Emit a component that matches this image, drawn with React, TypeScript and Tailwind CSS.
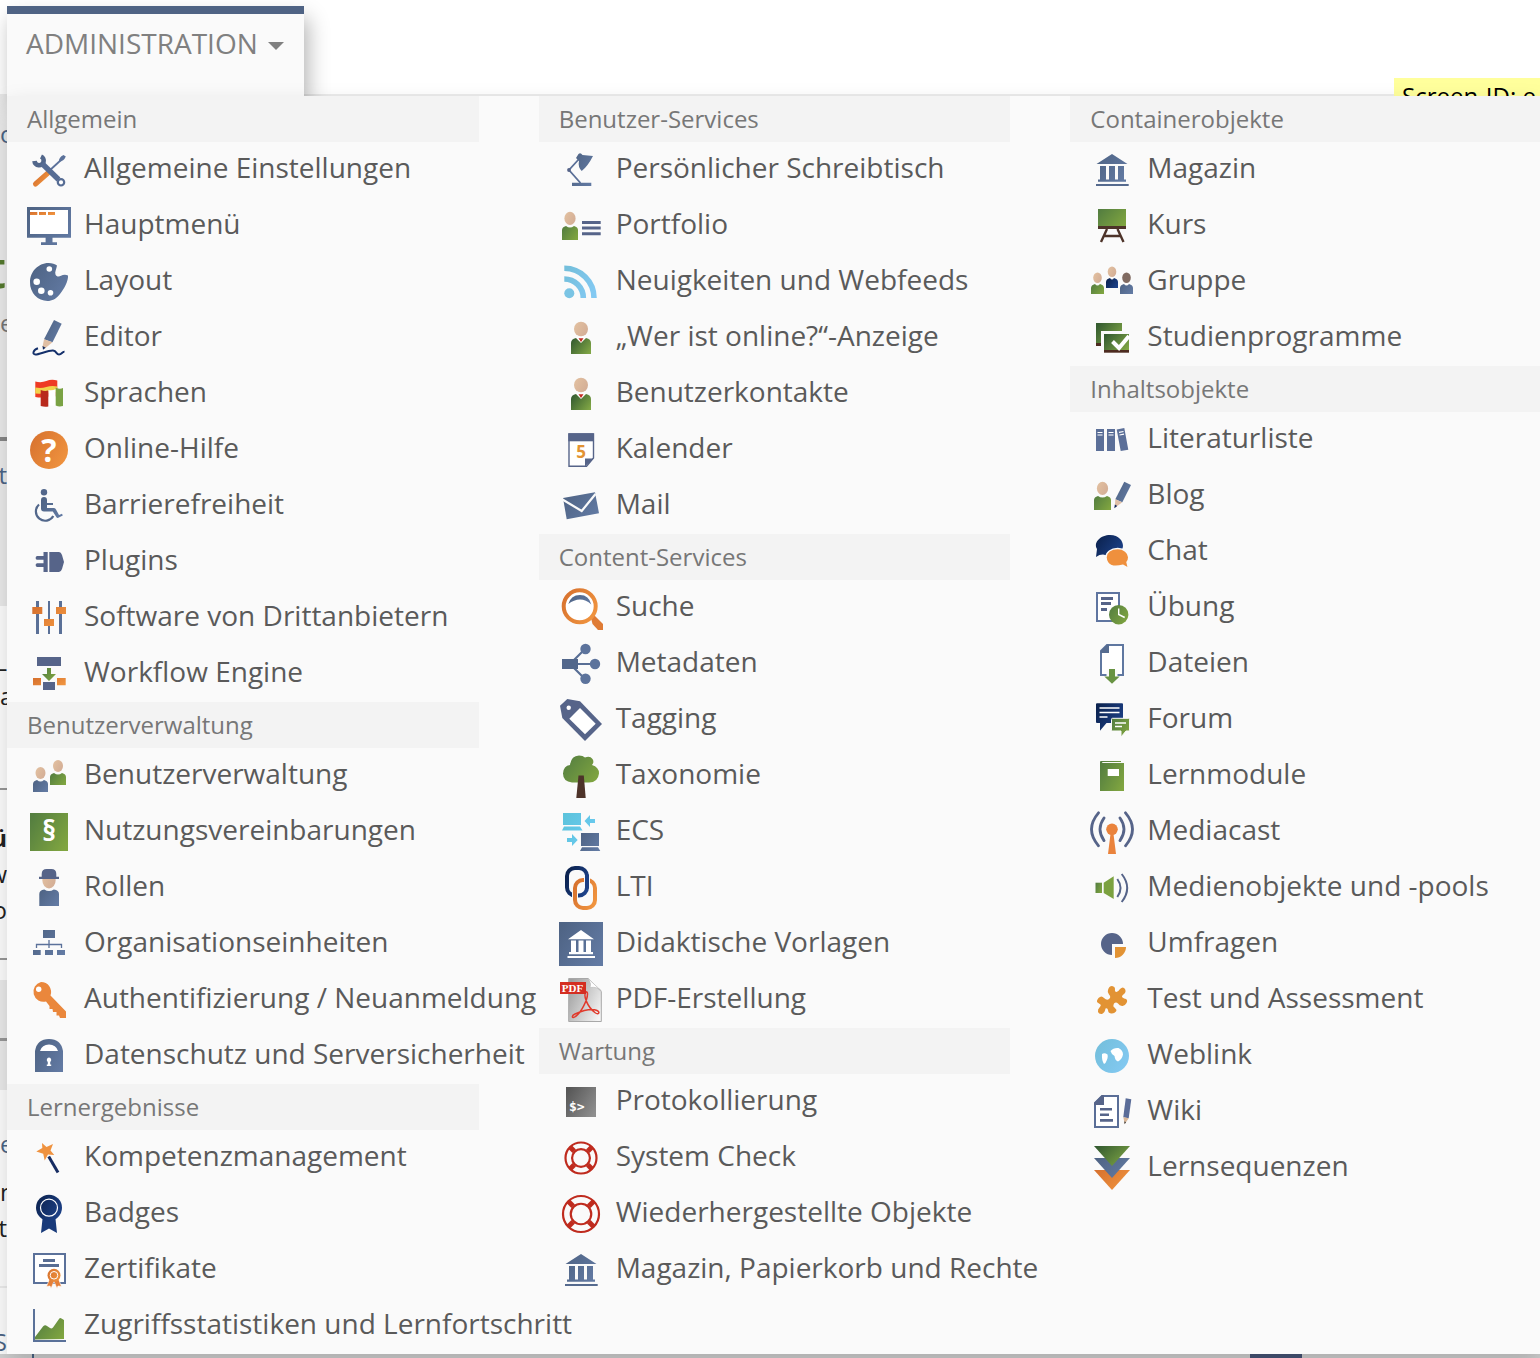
import { ReactNode } from "react";

const Svg = ({ children }: { children: ReactNode }) => (
    <svg viewBox="0 0 44 44" className="mt-1.5 size-11 shrink-0" aria-hidden="true">
        {children}
    </svg>
);

function Gradients() {
    const colors = [
        ["blue", "#4f6485", "#627aa3"],
        ["green", "#557f40", "#80a540"],
        ["darkgreen", "#355c30", "#7fa545"],
        ["orange", "#d8732f", "#f0943f"],
        ["navy", "#0c2350", "#1d428a"],
        ["sky", "#74bfdc", "#83c9f2"],
        ["cyan", "#5cc3dc", "#6ccbf2"],
        ["skin", "#e2c0a0", "#d3ad95"],
        ["gray", "#575757", "#8e8e8e"],
        ["paper", "#a0a0a0", "#f4f4f4"],
    ];
    return (
        <svg className="absolute size-0" aria-hidden="true">
            <defs>
                {colors.map(([id, from, to]) => (
                    <linearGradient key={id} id={id} x1="0" y1="0.2" x2="1" y2="0.8">
                        <stop offset="0" stopColor={from} />
                        <stop offset="1" stopColor={to} />
                    </linearGradient>
                ))}
            </defs>
        </svg>
    );
}

const Person = ({ x, y, w, h, fill, skin = "url(#skin)", r = 5 }: { x: number; y: number; w: number; h: number; fill: string; skin?: string; r?: number }) => (
    <>
        <path d={`M${x} ${y + h}v${-h + 4}q0-3 4-4q${w / 2 - 4} 3 ${w - 8} 0q4 1 4 4v${h - 4}z`} fill={fill} />
        <ellipse cx={x + w / 2} cy={y - r - 2} rx={r} ry={r + 1} fill={skin} />
    </>
);

const OnlineUser = () => (
    <Svg>
        <path d="M12 38V27q0-4 5-5h10q5 1 5 5v11z" fill="url(#darkgreen)" />
        <path d="M16.500 21.500l5.500 5.500 5.500-5.500z" fill="#fff" />
        <path d="M19.500 22.300h5L22 26z" fill="#c22a20" />
        <ellipse cx="22" cy="13" rx="7" ry="7.300" fill="url(#skin)" />
    </Svg>
);

const Temple = () => (
    <Svg>
        <path d="M22 6l15.500 10h-31zM10 18h6v13.500h3V18h6v13.500h3V18h6v13.500h2v2.200H8v-2.200h2z" fill="url(#blue)" />
        <path d="M6 36h32.700v2H6z" fill="#556a8e" />
    </Svg>
);

const Lifebuoy = ({ r }: { r: number }) => (
    <Svg>
        <g fill="none" stroke="#bf2b1e">
            <circle cx="22" cy="22" r={r - 1} strokeWidth="2.200" />
            <circle cx="22" cy="22" r={r * 0.54} strokeWidth="2.200" />
            {[45, 135, 225, 315].map((a) => (
                <path key={a} d={`M${22 + r * 0.58} 22H${22 + r - 1}`} strokeWidth="5" transform={`rotate(${a} 22 22)`} />
            ))}
        </g>
    </Svg>
);

const icons: Record<string, ReactNode> = {
    tools: (
        <Svg>
            <path d="M21 25L8.500 36" stroke="url(#orange)" strokeWidth="5" strokeLinecap="round" />
            <path d="M22 23L34 12" stroke="#5b719a" strokeWidth="1.800" />
            <path d="M32 13.500q-.5-4 4.500-6.500l2.300 1.500q-2 5-6.800 5z" fill="#5b719a" />
            <path d="M14 8.500A4.600 4.600 0 1 1 7.500 13" fill="none" stroke="#52678b" strokeWidth="4.600" />
            <path d="M15 15.500L31.500 31.500" stroke="#566c94" strokeWidth="5.400" />
            <circle cx="34" cy="34.300" r="3.200" fill="#fff" stroke="#566c94" strokeWidth="2.200" />
        </Svg>
    ),
    monitor: (
        <Svg>
            <path d="M0 3h44v30.700H25.500v4.600h4.500V41H14v-2.700h4.600v-4.600H0z" fill="url(#blue)" />
            <path d="M3 6h38v24H3z" fill="#fff" />
            <path d="M3 8h7.300v3H3zM12 8h7v3h-7zM21 8h7v3h-7z" fill="url(#orange)" />
        </Svg>
    ),
    palette: (
        <Svg>
            <path d="M21.500 3Q27 3 30 5.500C29.500 9 27.500 12 28.500 14.500S32 17 34 15.800 39 14.500 41 15.500C41.500 21 37 29 33 34S25 41 20.500 41A17.500 18.500 0 0 1 3 22C3 12 11 3 21.500 3z" fill="url(#blue)" />
            <g fill="#fff">
                <circle cx="22.300" cy="9" r="2.800" />
                <circle cx="9.700" cy="21.700" r="3.300" />
                <circle cx="14.300" cy="30.700" r="3.300" />
                <circle cx="23.500" cy="32.700" r="2.800" />
            </g>
        </Svg>
    ),
    editor: (
        <Svg>
            <path d="M27 4l7.700 3.700-9.200 18.600-8.500-3z" fill="url(#blue)" />
            <path d="M17 23.300l8.500 3L18.500 32l-3-1z" fill="#e0bfa4" />
            <path d="M15.500 30l3.200 1.800-2.700 2z" fill="#12295c" />
            <path d="M11 32.300C6 34 5 38.500 8.500 38.500S22 34 26 34.500 29 38.500 32 38.500 35 35.500 37.500 35.800" fill="none" stroke="#14306b" strokeWidth="2" />
        </Svg>
    ),
    flags: (
        <Svg>
            <path d="M8.300 9.500q6 1.500 11-.5t11-.5v16q-6-.5-11 .5t-11 0z" fill="#ee3a24" />
            <path d="M8.300 15.500q6 1 11-.5t11-.5v5.500q-6 0-11 1t-11 .5z" fill="#f1d24b" />
            <path d="M21.300 18q4 1 7.500-1v16q-3.500 1-7.500 0z" fill="#fff" />
            <path d="M13.700 18q4 1.500 7.600.5v16q-3.500.8-7.600-.5z" fill="#b8291c" />
            <path d="M28.700 15.500q4 2.200 7.300.5v18q-4 1-7.300-.5z" fill="#7aa244" />
        </Svg>
    ),
    help: (
        <Svg>
            <circle cx="22" cy="22" r="19" fill="url(#orange)" />
            <text x="22" y="34" textAnchor="middle" className="fill-white text-[32px] font-bold">?</text>
        </Svg>
    ),
    wheelchair: (
        <Svg>
            <circle cx="17" cy="8.300" r="3.200" fill="#52678b" />
            <path d="M14 16q0-3 3-3t3 3v3h6v2h-6v3h7q1.500 0 2 1.500l3 5.500 3-1.200.8 1.700-5 2.500q-1 0-1.500-1l-3.500-5.500H17q-3 0-3-3z" fill="url(#blue)" />
            <path d="M12 20.500A9.300 9.300 0 1 0 26.300 32" fill="none" stroke="#52678b" strokeWidth="2.200" />
        </Svg>
    ),
    plug: (
        <Svg>
            <path d="M10 16h6.500v-4h4.200v20h-4.200v-5H10a2 2 0 0 1 0-3.800h6.500v-3.400H10A2 2 0 0 1 10 16zM22.300 12H32q2 0 3 3l2 7-2 7q-1 3-3 3h-9.700z" fill="#566489" />
        </Svg>
    ),
    sliders: (
        <Svg>
            <path d="M9 5h3v33H9zM21 5h2v33h-2zM32 5h3v33h-3z" fill="#5a7097" />
            <path d="M5.300 11h10v7h-10zM17 23h10v7H17zM29 11h10v7H29z" fill="url(#orange)" />
        </Svg>
    ),
    workflow: (
        <Svg>
            <path d="M10 5h24v9H10zM16 30h12v8H16z" fill="#566489" />
            <path d="M6 26h8v7.300H6zM30 26h8.700v7.300H30z" fill="url(#orange)" />
            <path d="M20 16h4v6h5l-7 7-7-7h5z" fill="url(#green)" />
        </Svg>
    ),
    users: (
        <Svg>
            <Person x={6} y={26} w={15} h={12} fill="url(#blue)" />
            <Person x={23} y={19} w={16} h={12} fill="url(#green)" />
        </Svg>
    ),
    paragraph: (
        <Svg>
            <path d="M3 3h38v38H3z" fill="url(#green)" />
            <text x="22" y="31" textAnchor="middle" className="fill-white text-[28px] font-bold">§</text>
        </Svg>
    ),
    role: (
        <Svg>
            <ellipse cx="22" cy="14" rx="6.700" ry="8.500" fill="url(#skin)" />
            <path d="M12 10.700h2.700V8q0-5 5-5h4.600q5 0 5 5v2.700H32V13H12z" fill="#566489" />
            <path d="M12.300 40V28q0-4 5-4.500 4.700 3 9.500 0 5.200.5 5.200 4.500v12z" fill="url(#blue)" />
        </Svg>
    ),
    orgunit: (
        <Svg>
            <path d="M16 8h12v8H16zM6 28h7.700v5H6zM18 28h8v5h-8zM30 28h8v5h-8z" fill="url(#blue)" />
            <path d="M22 18v8M9.500 26v-3.500h25V26" fill="none" stroke="#5b719a" strokeWidth="1.300" />
        </Svg>
    ),
    key: (
        <Svg>
            <path d="M14 4a10 10 0 0 1 9.500 13.500L39 33.500V40h-6l-1-2.500h-2.500V34H26l-.5-3h-3v-3L19 23.500A10 10 0 1 1 14 4z" fill="#ea873c" />
            <circle cx="11.700" cy="11.300" r="2.700" fill="#fff" />
        </Svg>
    ),
    lock: (
        <Svg>
            <path d="M8 38V17Q10 5 22 5t14 12v21z" fill="url(#blue)" />
            <path d="M13 17q2-6.500 9-6.500t9 6.500zM22 23.500a2.500 2.500 0 0 1 1.200 4.500v2.500h1v1.500h-4.400v-1.500h1V28a2.500 2.500 0 0 1 1.200-4.500z" fill="#fff" />
        </Svg>
    ),
    wand: (
        <Svg>
            <path d="M21.700 20.500l9.300 16" stroke="#162c62" strokeWidth="3" />
            <path d="M15 7l4.500 4 6.500-3-2.500 6.500L27.300 19l-6.300-.5-3.300 6-1.500-6.700-6.900-2.300 6-3.500z" fill="#ef923f" />
        </Svg>
    ),
    badge: (
        <Svg>
            <path d="M15.700 25h12.600L30 41l-8-4.500-8 4.500z" fill="#183a7a" />
            <circle cx="22" cy="15.700" r="13" fill="url(#navy)" />
            <circle cx="22" cy="15.700" r="8.500" fill="none" stroke="#fff" strokeWidth="1.200" />
        </Svg>
    ),
    certificate: (
        <Svg>
            <path d="M7 6h31v29H7z" fill="#fff" stroke="#5b719a" strokeWidth="2" />
            <path d="M16 11h12v3H16zM12 16h20v3H12z" fill="#586d93" />
            <path d="M22.500 31h9l3 7.500-3.500-.5-1 2.500-3-7-3 7-1-2.500-3.500.5z" fill="#e57f38" stroke="#fff" strokeWidth=".6" />
            <circle cx="27" cy="27.300" r="6.500" fill="url(#orange)" />
            <circle cx="27" cy="27.300" r="3.800" fill="none" stroke="#fff" />
        </Svg>
    ),
    stats: (
        <Svg>
            <path d="M8 35.500V33l8-10.500q2-2 4-.5l3 2q1.500 1 3-.5l6-8.500q1-1.500 2.500-.5l2.500 1.500v19z" fill="url(#green)" />
            <path d="M7 5v32h32" fill="none" stroke="#5a7199" strokeWidth="2" />
        </Svg>
    ),
    lamp: (
        <Svg>
            <path d="M21.500 35L10 22 20 11" fill="none" stroke="#5a6f97" strokeWidth="1.800" />
            <circle cx="10" cy="22" r="1.900" fill="#566489" />
            <path d="M13 34.700h19.300V38H13zM17 10l2.500-4q2-2 4 1L34 8q-5 10-11.300 15-4-4-2.700-10z" fill="url(#blue)" />
        </Svg>
    ),
    portfolio: (
        <Svg>
            <Person x={3} y={22} w={16} h={14} fill="url(#green)" r={5.6} />
            <path d="M23 17h18.700v3H23zM23 22.500h18.700v3H23zM23 28.300h18.700v3H23z" fill="#566489" />
        </Svg>
    ),
    rss: (
        <Svg>
            <circle cx="10.300" cy="33.300" r="5" fill="#7ac4e4" />
            <path d="M5.300 8.300A29.700 29.700 0 0 1 35 38M5.300 19A19 19 0 0 1 24.300 38" fill="none" stroke="url(#sky)" strokeWidth="5.600" />
        </Svg>
    ),
    online: <OnlineUser />,
    calendar: (
        <Svg>
            <path d="M10 6h24.500v24l-7 8.300H10z" fill="#fff" stroke="#566489" strokeWidth="1.400" />
            <path d="M9.300 5.300h25.400v8H9.300z" fill="#566489" />
            <path d="M26 30.500h8.700l-8.700 8z" fill="#566489" />
            <text x="22" y="30" textAnchor="middle" className="fill-[#e29333] text-[17px] font-bold">5</text>
        </Svg>
    ),
    mail: (
        <Svg>
            <path d="M4 14l32-5.700 4 21-32.300 6z" fill="url(#blue)" />
            <path d="M3.500 15.500L22.700 27 36.500 10" fill="none" stroke="#fafafa" strokeWidth="2.200" />
        </Svg>
    ),
    search: (
        <Svg>
            <path d="M32 32l3-3 3 3 6 6v6h-5l-5.500-6z" fill="#df7b34" />
            <circle cx="20.700" cy="20.300" r="16" fill="#fff" stroke="url(#orange)" strokeWidth="4" />
            <path d="M9.300 18Q12 9 21 9t11.300 9.500Q27 13.500 21 13.500T9.300 18z" fill="url(#blue)" />
        </Svg>
    ),
    share: (
        <Svg>
            <path d="M11 22L26 7M11 22h25M11 22l15 15" stroke="#586e95" strokeWidth="2.200" />
            <path d="M3 17h16v10H3z" fill="#52678b" />
            <g fill="#5c739c">
                <circle cx="26.500" cy="7" r="5.200" />
                <circle cx="36" cy="22" r="5.200" />
                <circle cx="26.500" cy="36.700" r="5.200" />
            </g>
        </Svg>
    ),
    tag: (
        <Svg>
            <path d="M1 7.700L8.300 1 21 3.300 43 26 26 43 3.300 20z" fill="#566489" />
            <path d="M21 10l15.700 15.700L26 36.300 10.300 20.700z" fill="#fff" />
            <circle cx="9.700" cy="9.700" r="2.200" fill="#fff" />
        </Svg>
    ),
    tree: (
        <Svg>
            <path d="M11 11Q12 2 20 1.500q4 0 6 2 5-2 7.500 1.500 2 3-.5 6 7 2 7 8.500-1 9-10 9H13q-9-1-9-9 .5-8 7-8.500z" fill="url(#green)" />
            <path d="M19.500 21.500h5.300L26.700 44h-9.400z" fill="#4d3329" />
        </Svg>
    ),
    ecs: (
        <Svg>
            <path d="M4 3h18v12H4zM5 16.500h16l2.500 4H3zM25.500 11L31 5v4h5v4h-5v4zM8 28h5v-4l5.700 6-5.700 6v-4H8z" fill="url(#cyan)" />
            <path d="M22 23h18v13H22zM23 37.200h16l2.300 3.800H21z" fill="url(#blue)" />
        </Svg>
    ),
    link: (
        <Svg>
            <rect x="8" y="2" width="20" height="27.500" rx="8" fill="none" stroke="url(#navy)" strokeWidth="4" />
            <rect x="16" y="14" width="20" height="28" rx="8" fill="none" stroke="#fafafa" strokeWidth="6" />
            <rect x="16" y="14" width="20" height="28" rx="8" fill="none" stroke="url(#orange)" strokeWidth="4" />
            <path d="M28 9v13" stroke="#fafafa" strokeWidth="6" />
            <path d="M28 8.500v14" stroke="#1b3e83" strokeWidth="4" />
        </Svg>
    ),
    templates: (
        <Svg>
            <path d="M0 0h44v44H0z" fill="url(#blue)" />
            <path d="M22 8l13 9.300H9zM12 18.500h5V30h2.500V18.500h5V30H27V18.500h5V30h2v2.300H10V30h2zM8.500 34h27.500v2H8.500z" fill="#fff" />
        </Svg>
    ),
    pdf: (
        <Svg>
            <path d="M9.700 .5H29l13.300 13v30H9.700z" fill="url(#paper)" stroke="#a8a8a8" />
            <path d="M29 .5Q33 6 31 9.500q8-1 11.500 3.500z" fill="#fff" stroke="#bbb" strokeWidth=".6" />
            <path d="M27 14c-3 3 1 15 9.500 21 3 2 5-1 1.500-2.500-6-2.500-15 .5-22 3.500-4 2-3 5 .5 2.500C22 35 28.500 22 28.500 16c0-2-1-2.500-1.500-2z" fill="none" stroke="#e13a2b" strokeWidth="1.500" />
            <path d="M1 4h26v12H1z" fill="#d42e21" />
            <text x="13.500" y="14" textAnchor="middle" className="fill-white font-['Liberation_Serif',serif] text-[11px] font-bold">PDF</text>
        </Svg>
    ),
    terminal: (
        <Svg>
            <path d="M7 7h30v30H7z" fill="url(#gray)" />
            <text x="10" y="31" className="fill-white font-['DejaVu_Sans_Mono',monospace] text-[13px] font-bold">$&gt;</text>
        </Svg>
    ),
    check: <Lifebuoy r={16.5} />,
    restored: <Lifebuoy r={19} />,
    temple: <Temple />,
    course: (
        <Svg>
            <path d="M17 25l-6 13M27.500 25l6 13M14 32h16" fill="none" stroke="#4d3329" strokeWidth="2.400" />
            <path d="M8 5h28v18H8z" fill="url(#green)" />
            <path d="M8 22h28v3H8z" fill="#4d3329" />
        </Svg>
    ),
    group: (
        <Svg>
            <Person x={1} y={24} w={13} h={10} fill="url(#green)" r={4.3} />
            <Person x={16} y={18} w={12} h={10} fill="url(#navy)" r={4.3} />
            <Person x={30} y={24} w={13} h={10} fill="url(#blue)" skin="#806a61" r={4.3} />
        </Svg>
    ),
    program: (
        <Svg>
            <path d="M6 7h26v20H6z" fill="url(#darkgreen)" />
            <path d="M6 27h8v3H6z" fill="#4d2b20" />
            <path d="M11 15h29v23H11z" fill="#fafafa" />
            <path d="M14 18h25v16H14z" fill="url(#darkgreen)" />
            <path d="M14 34h25v2.700H14z" fill="#4d2b20" />
            <path d="M22.500 25.500l6.500 6.500 10-12" fill="none" stroke="#fff" strokeWidth="4" />
        </Svg>
    ),
    books: (
        <Svg>
            <path d="M6 11h8v22H6zM17 11h8v22h-8zM26.700 11.500l7.600-1.500 4 21.700-7.600 1.300z" fill="#5b6f98" />
            <path d="M7.500 14.500h5M7.500 17h5M18.500 14.500h5M18.500 17h5M29 14.300l4.500-.8M29.500 17l4.500-.8" stroke="#fff" strokeWidth="1.200" />
        </Svg>
    ),
    blog: (
        <Svg>
            <Person x={4} y={22} w={17} h={14} fill="url(#green)" r={5.6} />
            <path d="M34.300 7.700L41 11l-8.700 17.300-7-3z" fill="url(#blue)" />
            <path d="M25.300 25.300l7 3-7.500 5.400z" fill="#dfbfa6" />
            <path d="M24.900 30.500l2.300 1.500-2.900 2.200z" fill="#12295c" />
        </Svg>
    ),
    chat: (
        <Svg>
            <path d="M7 19C3 12 11 5 20 5s13 6 13 11-6 9.500-13 9.500q-4 0-7-1-2 0-3.500.5L6 27z" fill="url(#navy)" />
            <path d="M27.700 18.500c6 0 11 4 11 8.800q0 3-1.700 5l1.500 6-5.500-3q-16 4-17-8c0-5 5-8.800 11.700-8.800z" fill="#ef903d" stroke="#fafafa" strokeWidth="1.400" />
        </Svg>
    ),
    exercise: (
        <Svg>
            <path d="M7 7h22v28H7z" fill="#fff" stroke="#5f75a0" strokeWidth="2" />
            <path d="M11 11h12v3H11zM11 16h10v3H11zM11 22h6v3h-6z" fill="#566489" />
            <circle cx="28.700" cy="28.700" r="9.700" fill="url(#green)" />
            <path d="M28.700 22.500v6l6 3" fill="none" stroke="#fff" strokeWidth="1.400" />
        </Svg>
    ),
    files: (
        <Svg>
            <path d="M17 3h16v30H11V9z" fill="#fff" stroke="#5f77a0" strokeWidth="2" />
            <path d="M17 2.500h2V11h-8.500V9z" fill="#566c90" />
            <path d="M16.500 28h11v8h-11z" fill="#fafafa" />
            <path d="M19 27h6v7.500h4.700L22 41.700l-7.700-7.200H19z" fill="#689343" />
        </Svg>
    ),
    forum: (
        <Svg>
            <path d="M7 5.300h25q1 0 1 1V24q0 1-1 1H16.500L10 32.700V25H7q-1 0-1-1V6.300q0-1 1-1z" fill="url(#navy)" />
            <path d="M9.500 10h20M9.500 14.500h20M9.500 19h8" stroke="#fff" strokeWidth="1.300" />
            <path d="M22.500 20.300h16q1 0 1 1V32q0 1-1 1H36l-5 6v-6h-8.500q-1 0-1-1V21.300q0-1 1-1z" fill="url(#green)" stroke="#fafafa" />
            <path d="M25 25h11M25 28.500h7" stroke="#fff" strokeWidth="1.300" />
        </Svg>
    ),
    book: (
        <Svg>
            <path d="M10 8q0-1 1-1h20v1H12q0 1 1 1h21v28H10z" fill="url(#green)" />
            <path d="M17.700 15H29v7H17.700z" fill="#fff" />
        </Svg>
    ),
    mediacast: (
        <Svg>
            <g fill="none" stroke="#566489" strokeWidth="2.800" strokeLinecap="round">
                <path d="M14 8q-8 11.300 0 22.600M30 8q8 11.300 0 22.600M8.500 2.800q-14 16.500 0 33M35.500 2.800q14 16.500 0 33" />
            </g>
            <circle cx="22" cy="19.300" r="5.800" fill="#ea833c" />
            <path d="M20.500 24h3L26 44h-8z" fill="#ea833c" />
        </Svg>
    ),
    speaker: (
        <Svg>
            <path d="M5.500 16.700H12V27H5.500z" fill="url(#green)" />
            <path d="M13.700 16.700l10-6.400V33l-10-6z" fill="#7ba13f" />
            <path d="M27.300 13q6.500 9 0 18M31.700 8q11 14 0 28" fill="none" stroke="#566489" strokeWidth="2" />
        </Svg>
    ),
    survey: (
        <Svg>
            <path d="M22 22h11a11 11 0 1 0-11 11z" fill="#566489" />
            <path d="M25 25h11a11 11 0 0 1-11 11z" fill="#e29334" />
        </Svg>
    ),
    puzzle: (
        <Svg>
            <path d="M18 12q1-4 4-4 3 .5 3 3-.5 3 1.500 3 1.500 0 3.500-3 3-3 5 0 1.500 3-1 5-3 2-1.500 3.500 1.500 1 3.500 1.500 2 1.500.5 4-2 3.500-4.500 3t-4-2.500q-2-2-4 0-1.500 3 .5 4 2.500 2 1.500 4-2 2.500-5 2t-3-3.500q-.5-2.500-2.500-1.500-.5 4-3.500 5.500-3 .5-4-2-.5-3 1.500-4.500 2-2 1-3-1.500-1-3-2Q6 23 8.500 20q3-3 5.500 0 3 3 5 1 2.500-2 0-4.500-2-2-1-4.500z" fill="#e29334" />
        </Svg>
    ),
    globe: (
        <Svg>
            <circle cx="22" cy="22" r="17" fill="url(#sky)" />
            <path d="M20.500 17q3-3.500 8-3 4.500 2 4.500 6.500-1 5-5 7-3-1-3.500-5.500-3-1.500-4-5zM12 20q2.500-1.500 5.500.5 1 3-2 8.500l-1.500 1q-2.500-4-2-10z" fill="#fff" />
        </Svg>
    ),
    wiki: (
        <Svg>
            <path d="M12 6h16v31H5V13z" fill="#fff" stroke="#5a6e97" strokeWidth="2" />
            <path d="M12 5h2v10H4v-2z" fill="#566489" />
            <path d="M10 18h12v2.500H10zM10 23.500h9V26h-9zM10 29h13v2.700H10z" fill="#566489" />
            <path d="M35.700 8.300l5.600 1-2.600 19-5.400-1z" fill="#5a6c98" />
            <path d="M33.300 27.300l5.400 1-4 5.700z" fill="#d9b798" />
            <path d="M34.200 31.500l1.800.4-1.300 2.300z" fill="#333" />
        </Svg>
    ),
    sequence: (
        <Svg>
            <path d="M4 24h36L22 44z" fill="url(#orange)" />
            <path d="M4 12h36L22 32z" fill="url(#blue)" />
            <path d="M4 0h36L22 20z" fill="url(#darkgreen)" />
        </Svg>
    ),
};

type Section = { title: string; items: [string, string][] };

const columns: Section[][] = [
    [
        {
            title: "Allgemein",
            items: [
                ["tools", "Allgemeine Einstellungen"],
                ["monitor", "Hauptmenü"],
                ["palette", "Layout"],
                ["editor", "Editor"],
                ["flags", "Sprachen"],
                ["help", "Online-Hilfe"],
                ["wheelchair", "Barrierefreiheit"],
                ["plug", "Plugins"],
                ["sliders", "Software von Drittanbietern"],
                ["workflow", "Workflow Engine"],
            ],
        },
        {
            title: "Benutzerverwaltung",
            items: [
                ["users", "Benutzerverwaltung"],
                ["paragraph", "Nutzungsvereinbarungen"],
                ["role", "Rollen"],
                ["orgunit", "Organisationseinheiten"],
                ["key", "Authentifizierung / Neuanmeldung"],
                ["lock", "Datenschutz und Serversicherheit"],
            ],
        },
        {
            title: "Lernergebnisse",
            items: [
                ["wand", "Kompetenzmanagement"],
                ["badge", "Badges"],
                ["certificate", "Zertifikate"],
                ["stats", "Zugriffsstatistiken und Lernfortschritt"],
            ],
        },
    ],
    [
        {
            title: "Benutzer-Services",
            items: [
                ["lamp", "Persönlicher Schreibtisch"],
                ["portfolio", "Portfolio"],
                ["rss", "Neuigkeiten und Webfeeds"],
                ["online", "„Wer ist online?“-Anzeige"],
                ["online", "Benutzerkontakte"],
                ["calendar", "Kalender"],
                ["mail", "Mail"],
            ],
        },
        {
            title: "Content-Services",
            items: [
                ["search", "Suche"],
                ["share", "Metadaten"],
                ["tag", "Tagging"],
                ["tree", "Taxonomie"],
                ["ecs", "ECS"],
                ["link", "LTI"],
                ["templates", "Didaktische Vorlagen"],
                ["pdf", "PDF-Erstellung"],
            ],
        },
        {
            title: "Wartung",
            items: [
                ["terminal", "Protokollierung"],
                ["check", "System Check"],
                ["restored", "Wiederhergestellte Objekte"],
                ["temple", "Magazin, Papierkorb und Rechte"],
            ],
        },
    ],
    [
        {
            title: "Containerobjekte",
            items: [
                ["temple", "Magazin"],
                ["course", "Kurs"],
                ["group", "Gruppe"],
                ["program", "Studienprogramme"],
            ],
        },
        {
            title: "Inhaltsobjekte",
            items: [
                ["books", "Literaturliste"],
                ["blog", "Blog"],
                ["chat", "Chat"],
                ["exercise", "Übung"],
                ["files", "Dateien"],
                ["forum", "Forum"],
                ["book", "Lernmodule"],
                ["mediacast", "Mediacast"],
                ["speaker", "Medienobjekte und -pools"],
                ["survey", "Umfragen"],
                ["puzzle", "Test und Assessment"],
                ["globe", "Weblink"],
                ["wiki", "Wiki"],
                ["sequence", "Lernsequenzen"],
            ],
        },
    ],
];

// Page content that peeks out beside the open menu
function Backdrop() {
    return (
        <div className="text-2xl leading-9 text-[#222]">
            <header className="flex h-24 items-end justify-end border-b-2 border-[#ececec] bg-white">
                <p className="-mb-0.5 h-[18px] w-[146px] overflow-hidden bg-[#ffff9c] pl-2 whitespace-nowrap text-black">Screen-ID: e</p>
            </header>
            <div className="h-[510px] bg-[#ececec] pt-5">
                <p className="w-[7px] overflow-hidden text-[#4c6586]">o</p>
                <p className="mt-[91px] flex w-1.5 justify-end overflow-hidden text-[52px] leading-[50px] font-semibold text-[#557b2e]">t</p>
                <p className="mt-3 w-[7px] overflow-hidden text-[#777]">e</p>
                <hr className="mt-24 border-t-4 border-[#888]" />
                <p className="mt-4 flex w-[7px] justify-end overflow-hidden text-[#4c6586]">lt</p>
            </div>
            <div className="h-[374px] bg-white pt-[38px]">
                <p className="flex w-[7px] justify-end overflow-hidden">.L</p>
                <p className="w-[7px] overflow-hidden leading-8">a</p>
                <hr className="mt-[76px] border-t-2 border-[#999]" />
                <p className="mt-[30px] flex w-[7px] justify-end overflow-hidden font-bold">ü</p>
                <p className="flex w-[7px] justify-end overflow-hidden">w</p>
                <p className="flex w-[7px] justify-end overflow-hidden">o</p>
                <hr className="mt-[30px] border-t-2 border-[#999]" />
            </div>
            <div className="h-[110px] bg-[#ececec] pt-[58px]">
                <hr className="border-t-[3px] border-[#999]" />
            </div>
            <div className="h-[264px] bg-white pt-9">
                <p className="w-[7px] overflow-hidden text-[#4c6586]">e</p>
                <p className="mt-3 w-[7px] overflow-hidden">n</p>
                <p className="flex w-[7px] justify-end overflow-hidden">t</p>
                <hr className="mt-10 border-t-2 border-[#eee]" />
                <p className="mt-9 flex h-[30px] w-[7px] justify-end overflow-hidden text-[#4c6586]">S</p>
            </div>
            <footer className="flex h-1 justify-between bg-[#d3d3d3] pr-[238px] pl-8">
                <span className="w-0.5 bg-[#4c6586]" />
                <span className="w-[52px] bg-[#475678]" />
            </footer>
        </div>
    );
}

export default function App() {
    return (
        <div className="relative overflow-hidden bg-white font-['Open_Sans','Noto_Sans',sans-serif]">
            <Gradients />
            <Backdrop />

            <nav className="absolute top-1.5 -right-0.5 left-[7px]">
                <button className="flex h-[90px] w-[297px] items-start gap-2.5 border-t-8 border-[#4f6384] bg-[#fafafa] pl-[19px] text-[28px] leading-[58px] text-[#808080] shadow-[4px_12px_20px_rgba(0,0,0,0.3)]">
                    ADMINISTRATION
                    <svg viewBox="0 0 16 8" className="mt-7 h-2 w-4" aria-hidden="true">
                        <path d="M0 0h16L8 8z" fill="#808080" />
                    </svg>
                </button>

                <div className="relative grid grid-cols-3 gap-x-[60px] bg-[#fafafa] shadow-[0_12px_24px_rgba(0,0,0,0.18)]">
                    {columns.map((sections, i) => (
                        <div key={i} className="min-w-0">
                            {sections.map((section) => (
                                <section key={section.title}>
                                    <h2 className="bg-[#f3f3f3] pl-5 text-2xl leading-[46px] text-[#777]">{section.title}</h2>
                                    <ul>
                                        {section.items.map(([icon, label]) => (
                                            <li key={label}>
                                                <a href="#" className="flex h-14 items-start gap-[13px] pl-5 text-[28px] leading-[50px] whitespace-nowrap text-[#5a5a5a]">
                                                    {icons[icon]}
                                                    {label}
                                                </a>
                                            </li>
                                        ))}
                                    </ul>
                                </section>
                            ))}
                        </div>
                    ))}
                </div>
            </nav>
        </div>
    );
}
